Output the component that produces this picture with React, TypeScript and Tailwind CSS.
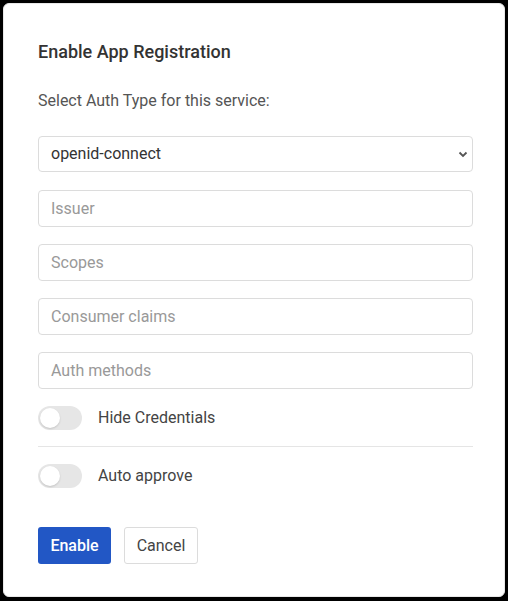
import React from "react";

function Toggle({ label }: { label: string }) {
  return (
    <div className="flex items-center h-[26px]">
      <div className="relative w-[44px] h-[24px] rounded-full bg-[#e6e6e6]">
        <div className="absolute left-[2px] top-[2px] w-[20px] h-[20px] rounded-full bg-white shadow-[0_1px_2px_rgba(0,0,0,0.15)]" />
      </div>
      <span className="ml-[16px] text-[16px] text-[#444]">{label}</span>
    </div>
  );
}

function Field({ placeholder }: { placeholder: string }) {
  return (
    <div className="h-[37px] rounded-[4px] border border-[#dcdcdc] flex items-center px-[12px] text-[16px] text-[#999]">
      {placeholder}
    </div>
  );
}

export default function App() {
  return (
    <div className="bg-black w-[508px] h-[601px] pl-[3px] pr-[3px] pt-[3px] pb-[4px]" style={{ fontFamily: "Roboto, 'Liberation Sans', sans-serif" }}>
      <div className="bg-white h-full rounded-[6px] border border-[#e8e8e8] pl-[34px] pr-[31px] pt-[36px]">
        <h1 className="text-[18px] font-medium text-[#333] leading-[24px]">Enable App Registration</h1>
        <p className="mt-[26px] text-[16px] text-[#555] leading-[22px]">Select Auth Type for this service:</p>
        <div className="mt-[24px] h-[36px] rounded-[4px] border border-[#dcdcdc] flex items-center justify-between pl-[12px] pr-[4px] text-[16px] text-[#333]">
          <span>openid-connect</span>
          <svg width="10" height="7" viewBox="0 0 10 7">
            <path d="M1.5 1.5 L5 5 L8.5 1.5" fill="none" stroke="#555" strokeWidth="1.8" />
          </svg>
        </div>
        <div className="mt-[18px] flex flex-col gap-[17px]">
          <Field placeholder="Issuer" />
          <Field placeholder="Scopes" />
          <Field placeholder="Consumer claims" />
          <Field placeholder="Auth methods" />
        </div>
        <div className="mt-[16px]">
          <Toggle label="Hide Credentials" />
        </div>
        <div className="mt-[15px] border-t border-[#e5e5e5]" />
        <div className="mt-[16px]">
          <Toggle label="Auto approve" />
        </div>
        <div className="mt-[38px] flex gap-[13px]">
          <button className="h-[37px] w-[73px] flex items-center justify-center rounded-[3px] bg-[#2257c5] text-white text-[16px] font-medium">Enable</button>
          <button className="h-[37px] w-[74px] flex items-center justify-center rounded-[3px] border border-[#dcdcdc] bg-white text-[#444] text-[16px]">Cancel</button>
        </div>
      </div>
    </div>
  );
}
